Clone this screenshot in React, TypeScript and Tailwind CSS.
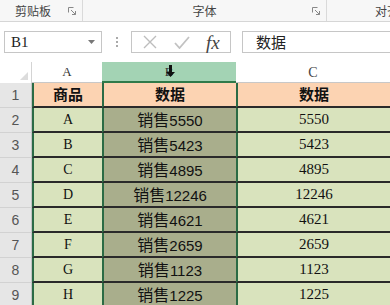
import React from 'react';

const rows = [
  { n: 2, a: 'A', b: '5550' },
  { n: 3, a: 'B', b: '5423' },
  { n: 4, a: 'C', b: '4895' },
  { n: 5, a: 'D', b: '12246' },
  { n: 6, a: 'E', b: '4621' },
  { n: 7, a: 'F', b: '2659' },
  { n: 8, a: 'G', b: '1123' },
  { n: 9, a: 'H', b: '1225' },
];

const serif = 'font-["SimSun","Liberation_Serif","Noto_Sans_CJK_SC",serif]';
const cjk = 'font-["Noto_Sans_CJK_SC","Noto_Sans",sans-serif]';

const App = () => {
  return (
    <div className={`w-[390px] h-[305px] overflow-hidden bg-white ${cjk}`}>
      {/* Ribbon group labels */}
      <div className="h-[22px] flex items-center bg-[#f7f7f7] border-b border-[#d6d6d6] text-[12px] text-[#444] whitespace-nowrap overflow-hidden">
        <div className="w-[83px] shrink-0 h-full flex items-center justify-between pl-[15px] pr-[6px] border-r border-[#dadada]">
          <span>剪贴板</span>
          <Launcher />
        </div>
        <div className="w-[244px] shrink-0 h-full flex items-center relative border-r border-[#dadada]">
          <span className="w-full text-center">字体</span>
          <span className="absolute right-[6px] top-[7px]"><Launcher /></span>
        </div>
        <div className="flex-1 min-w-0 pl-[48px] overflow-hidden">对齐</div>
      </div>

      {/* Formula bar */}
      <div className="h-[40px] flex items-center">
        <div className="ml-[4px] w-[98px] h-[22px] border border-[#c6c6c6] flex items-center justify-between px-[6px]">
          <span className={`${serif} text-[15px] text-[#222]`}>B1</span>
          <svg width="7" height="4" viewBox="0 0 7 4"><path d="M0 0h7L3.5 4z" fill="#777" /></svg>
        </div>
        <div className="ml-[14px] w-[3px] flex flex-col gap-[2px]">
          <span className="w-[2px] h-[2px] bg-[#aaa]" />
          <span className="w-[2px] h-[2px] bg-[#aaa]" />
          <span className="w-[2px] h-[2px] bg-[#aaa]" />
        </div>
        <div className="ml-[12px] w-[100px] h-[22px] border border-[#c6c6c6] flex items-center">
          <svg className="ml-[11px]" width="14" height="14" viewBox="0 0 14 14">
            <path d="M1 1l12 12M13 1L1 13" stroke="#bdbdbd" strokeWidth="1.4" />
          </svg>
          <svg className="ml-[17px]" width="16" height="13" viewBox="0 0 16 13">
            <path d="M1 7l4.5 5L15 1" stroke="#c2c2c2" strokeWidth="1.8" fill="none" />
          </svg>
          <span className={`ml-[16px] font-["Liberation_Serif",serif] italic text-[19px] leading-none text-[#444]`}>fx</span>
        </div>
        <div className="ml-[11px] flex-1 h-[22px] border border-r-0 border-[#c6c6c6] flex items-center pl-[13px] text-[15px] text-[#222]">
          数据
        </div>
      </div>

      {/* Column headers */}
      <div className="h-[21px] flex">
        <div className="w-[32px] h-full bg-white border-r border-[#d4d4d4] relative">
          <svg className="absolute right-[3px] bottom-[3px]" width="8" height="8" viewBox="0 0 8 8"><path d="M8 0v8H0z" fill="#dcdcdc" /></svg>
        </div>
        <div className={`w-[70px] h-full flex items-center justify-center border-b border-[#c8c8c8] text-[13px] text-[#333] ${serif}`}>A</div>
        <div className={`w-[134px] h-full flex items-center justify-center bg-[#a3d3b4] border-b-2 border-[#2f7a4a] relative text-[13px] text-[#333] ${serif}`}>
          <span>B</span>
          <svg className="absolute left-[64px] top-[3px]" width="9" height="12" viewBox="0 0 9 12">
            <path d="M3 0h3v7h3L4.5 12 0 7h3z" fill="#111" />
          </svg>
        </div>
        <div className={`flex-1 h-full flex items-center justify-center border-b border-[#c8c8c8] text-[14px] text-[#444] ${serif}`}>C</div>
      </div>

      {/* Header row 1 */}
      <div className="h-[25px] flex">
        <div className="w-[32px] h-full bg-[#e6e6e6] border-r border-[#c4c4c4] border-b border-b-[#d2d2d2] flex items-center justify-center text-[14px] text-[#555] font-['Liberation_Sans',sans-serif]">1</div>
        <div className="w-[70px] h-full bg-[#fcd3b2] border-l-2 border-[#2b6b45] border-b-2 border-b-[#2a2a2a] flex items-center justify-center font-bold text-[15px] text-[#111]">商品</div>
        <div className="w-[134px] h-full bg-[#fcd3b2] border-l-2 border-[#2b6b45] border-b-2 border-b-[#2a2a2a] flex items-center justify-center font-bold text-[15px] text-[#111]">数据</div>
        <div className="flex-1 h-full bg-[#fcd3b2] border-l-2 border-[#2b6b45] border-b-2 border-b-[#2a2a2a] flex items-center justify-center font-bold text-[15px] text-[#111]">数据</div>
      </div>

      {/* Data rows */}
      {rows.map((r) => (
        <div key={r.n} className="h-[25px] flex">
          <div className="w-[32px] h-full bg-[#e6e6e6] border-r border-[#c4c4c4] border-b border-b-[#d2d2d2] flex items-center justify-center text-[14px] text-[#555] font-['Liberation_Sans',sans-serif]">{r.n}</div>
          <div className={`w-[70px] h-full bg-[#d9e3bd] border-l-2 border-[#2b6b45] border-b-2 border-b-[#2a2a2a] flex items-center justify-center text-[14px] text-[#111] ${serif}`}>{r.a}</div>
          <div className="w-[134px] h-full bg-[#a9ae8c] border-l-2 border-[#2b6b45] border-b-2 border-b-[#2a2a2a] flex items-center justify-center">
            <span className="text-[16px] leading-[20px] text-[#111]">
              销售<span className="font-['Liberation_Sans',sans-serif] text-[15px]">{r.b}</span>
            </span>
          </div>
          <div className={`flex-1 h-full bg-[#d9e3bd] border-l-2 border-[#2b6b45] border-b-2 border-b-[#2a2a2a] flex items-center justify-center text-[15px] text-[#111] ${serif}`}>{r.b}</div>
        </div>
      ))}
    </div>
  );
};

const Launcher = () => (
  <svg width="8" height="8" viewBox="0 0 8 8">
    <path d="M0.5 0.5h5M0.5 0.5v5" stroke="#888" strokeWidth="1" />
    <path d="M3 3l4.5 4.5M7.5 4v3.5H4" stroke="#888" strokeWidth="1" fill="none" />
  </svg>
);

export default App;
